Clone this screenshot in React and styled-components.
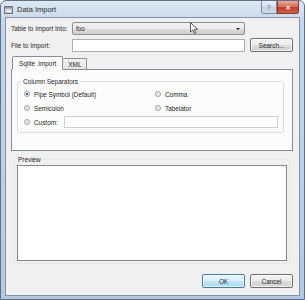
import React from "react";
import styled, { createGlobalStyle } from "styled-components";

const Global = createGlobalStyle`
  html, body { margin: 0; padding: 0; background: #ffffff; }
  body { font-family: "Liberation Sans", "DejaVu Sans", sans-serif; }
`;

const Window = styled.div`
  position: relative;
  width: 305px;
  height: 300px;
  box-sizing: border-box;
  display: flex;
  flex-direction: column;
  background: linear-gradient(180deg, #dce7f3 0%, #c5d6e9 8%, #bdd0e5 60%, #b3c9e0 100%);
  border: 1px solid #5d7189;
  border-radius: 6px 6px 0 0;
  overflow: hidden;
`;

const TitleBar = styled.div`
  height: 16px;
  display: flex;
  align-items: center;
  padding-left: 3px;
  gap: 4px;
`;

const Title = styled.span`
  font-size: 7.5px;
  color: #2b2b2b;
  flex: 1;
`;

const Caption = styled.div`
  display: flex;
  align-self: flex-start;
  margin-right: 5px;
`;

const CapBtn = styled.div`
  width: ${p => p.$w}px;
  height: 13px;
  display: flex;
  align-items: center;
  justify-content: center;
  box-sizing: border-box;
  border: 1px solid ${p => (p.$close ? "#7a3b32" : "#7d8c9e")};
  border-top: none;
  border-radius: ${p => (p.$close ? "0 0 3px 0" : "0 0 0 3px")};
  background: ${p =>
    p.$close
      ? "linear-gradient(180deg, #e9a99b 0%, #d8705c 45%, #c43b22 55%, #d8604a 100%)"
      : "linear-gradient(180deg, #e8eef5 0%, #d5dfea 45%, #c3cfdc 55%, #d4dde8 100%)"};
  color: #fff;
  font-size: 8px;
  font-weight: bold;
`;

const HelpMark = styled.span`
  color: #8392a4;
  font-size: 7px;
`;

const Body = styled.div`
  flex: 1;
  margin: 0 4px 3px 4px;
  background: #f0f0f0;
  border: 1px solid #8194ab;
  display: flex;
  flex-direction: column;
  padding: 4px 6px 7px 5px;
  font-size: 6.4px;
  color: #1e1e1e;
`;

const FormGrid = styled.div`
  display: grid;
  grid-template-columns: 61px 173px 43px;
  row-gap: 3px;
  align-items: center;
  > :nth-child(3n) { margin-left: 5px; }
`;

const Label = styled.span`
  white-space: nowrap;
`;

const Field = styled.div`
  height: 13px;
  box-sizing: border-box;
  border: 1px solid ${p => (p.$combo ? "#8e8f8f" : "#abadb3")};
  border-radius: ${p => (p.$combo ? "2px" : "0")};
  background: ${p =>
    p.$combo ? "linear-gradient(180deg, #f2f2f2 0%, #ebebeb 50%, #dddddd 51%, #cfcfcf 100%)" : "#ffffff"};
  display: flex;
  align-items: center;
  padding: 0 3px;
  justify-content: space-between;
`;

const Arrow = styled.span`
  width: 0;
  height: 0;
  border-left: 2px solid transparent;
  border-right: 2px solid transparent;
  border-top: 2.5px solid #222;
  margin-right: 1px;
`;

const Button = styled.button`
  width: 43px;
  height: 14px;
  box-sizing: border-box;
  padding: 0;
  font-family: inherit;
  font-size: 6.4px;
  color: #1e1e1e;
  border: 1px solid ${p => (p.$primary ? "#3c7fb1" : "#707070")};
  border-radius: 2px;
  background: ${p =>
    p.$primary
      ? "linear-gradient(180deg, #eaf6fd 0%, #d9f0fc 50%, #bee6fd 51%, #a7d9f5 100%)"
      : "linear-gradient(180deg, #f2f2f2 0%, #ebebeb 50%, #dddddd 51%, #cfcfcf 100%)"};
  box-shadow: inset 0 0 0 1px rgba(255, 255, 255, 0.7);
`;

const Tabs = styled.div`
  margin-top: 3px;
  display: flex;
  align-items: flex-end;
  padding-left: 1px;
  height: 14px;
  position: relative;
  z-index: 1;
`;

const Tab = styled.div`
  height: ${p => (p.$active ? 14 : 11)}px;
  box-sizing: border-box;
  padding: 0 ${p => (p.$active ? 6 : 5)}px;
  display: flex;
  align-items: center;
  border: 1px solid #898c95;
  border-bottom: ${p => (p.$active ? "1px solid #fcfcfc" : "none")};
  border-left: ${p => (p.$active ? "1px solid #898c95" : "none")};
  border-radius: 2px 2px 0 0;
  background: ${p => (p.$active ? "#fcfcfc" : "linear-gradient(180deg, #f2f2f2 0%, #e3e3e3 100%)")};
  margin-bottom: ${p => (p.$active ? -1 : 0)}px;
`;

const Pane = styled.div`
  height: 82px;
  box-sizing: border-box;
  border: 1px solid #898c95;
  background: #fcfcfc;
  padding: 8px 8px 0 5px;
`;

const Group = styled.fieldset`
  margin: 0;
  border: 1px solid #dcdcdc;
  border-radius: 3px;
  padding: ${p => p.$pad || "4px 5px 5px 6px"};
  min-width: 0;
  legend {
    padding: 0 2px;
    margin-left: -3px;
    font-size: 6.4px;
  }
`;

const RadioGrid = styled.div`
  display: grid;
  grid-template-columns: 131px 1fr;
  row-gap: 4px;
  align-items: center;
`;

const RadioRow = styled.label`
  display: flex;
  align-items: center;
  gap: 4px;
  height: 10px;
  grid-column: ${p => (p.$wide ? "1 / -1" : "auto")};
`;

const Dot = styled.span`
  width: 6px;
  height: 6px;
  border-radius: 50%;
  box-sizing: border-box;
  border: 1px solid #a3a3a3;
  background: ${p =>
    p.$on ? "radial-gradient(circle, #1f4a7a 0%, #3d79b8 40%, #e8eef4 55%)" : "radial-gradient(circle, #d8d8d8 0%, #f4f4f4 70%)"};
  flex: none;
`;

const CustomInput = styled.div`
  flex: 1;
  height: 12px;
  margin-left: 2px;
  box-sizing: border-box;
  border: 1px solid #cdcdcd;
  background: #ffffff;
`;

const PreviewGroup = styled(Group)`
  margin-top: 5px;
  margin-left: 3px;
  margin-right: 3px;
  flex: 1;
  display: flex;
  border-color: #e6e6e6;
  legend { margin-left: -1px; }
`;

const PreviewBox = styled.div`
  flex: 1;
  background: #ffffff;
  border: 1px solid #828790;
`;

const Footer = styled.div`
  display: flex;
  justify-content: flex-end;
  gap: 5px;
  margin-top: 10px;
`;

const Cursor = styled.svg`
  position: absolute;
  left: 189px;
  top: 21px;
`;

function AppIcon() {
  return (
    <svg width="9" height="9" viewBox="0 0 9 9">
      <rect x="0.5" y="1.5" width="8" height="7" fill="#d5d9df" stroke="#6b7480" />
      <rect x="1" y="2" width="7" height="1.5" fill="#8a98a8" />
      <rect x="2" y="4.5" width="5" height="3" fill="#ffffff" stroke="#9aa3ad" strokeWidth="0.5" />
    </svg>
  );
}

export default function App() {
  return (
    <>
      <Global />
      <Window>
        <TitleBar>
          <AppIcon />
          <Title>Data Import</Title>
          <Caption>
            <CapBtn $w={16}>
              <HelpMark>?</HelpMark>
            </CapBtn>
            <CapBtn $w={22} $close>×</CapBtn>
          </Caption>
        </TitleBar>
        <Body>
          <FormGrid>
            <Label>Table to Import Into:</Label>
            <Field $combo>
              <span>foo</span>
              <Arrow />
            </Field>
            <span />
            <Label>File to Import:</Label>
            <Field />
            <Button>Search...</Button>
          </FormGrid>
          <Tabs>
            <Tab $active>Sqlite .import</Tab>
            <Tab>XML</Tab>
          </Tabs>
          <Pane>
            <Group>
              <legend>Column Separators</legend>
              <RadioGrid>
                <RadioRow><Dot $on />Pipe Symbol (Default)</RadioRow>
                <RadioRow><Dot />Comma</RadioRow>
                <RadioRow><Dot />Semicolon</RadioRow>
                <RadioRow><Dot />Tabelator</RadioRow>
                <RadioRow $wide><Dot />Custom:<CustomInput /></RadioRow>
              </RadioGrid>
            </Group>
          </Pane>
          <PreviewGroup $pad="2px 2px 2px 2px">
            <legend>Preview</legend>
            <PreviewBox />
          </PreviewGroup>
          <Footer>
            <Button $primary>OK</Button>
            <Button>Cancel</Button>
          </Footer>
        </Body>
        <Cursor width="9" height="13" viewBox="0 0 9 13">
          <path d="M0.5 0.5 L0.5 10 L2.8 7.8 L4.4 11.6 L5.9 11 L4.4 7.3 L7.6 7.3 Z" fill="#ffffff" stroke="#333" strokeWidth="0.8" />
        </Cursor>
      </Window>
    </>
  );
}
